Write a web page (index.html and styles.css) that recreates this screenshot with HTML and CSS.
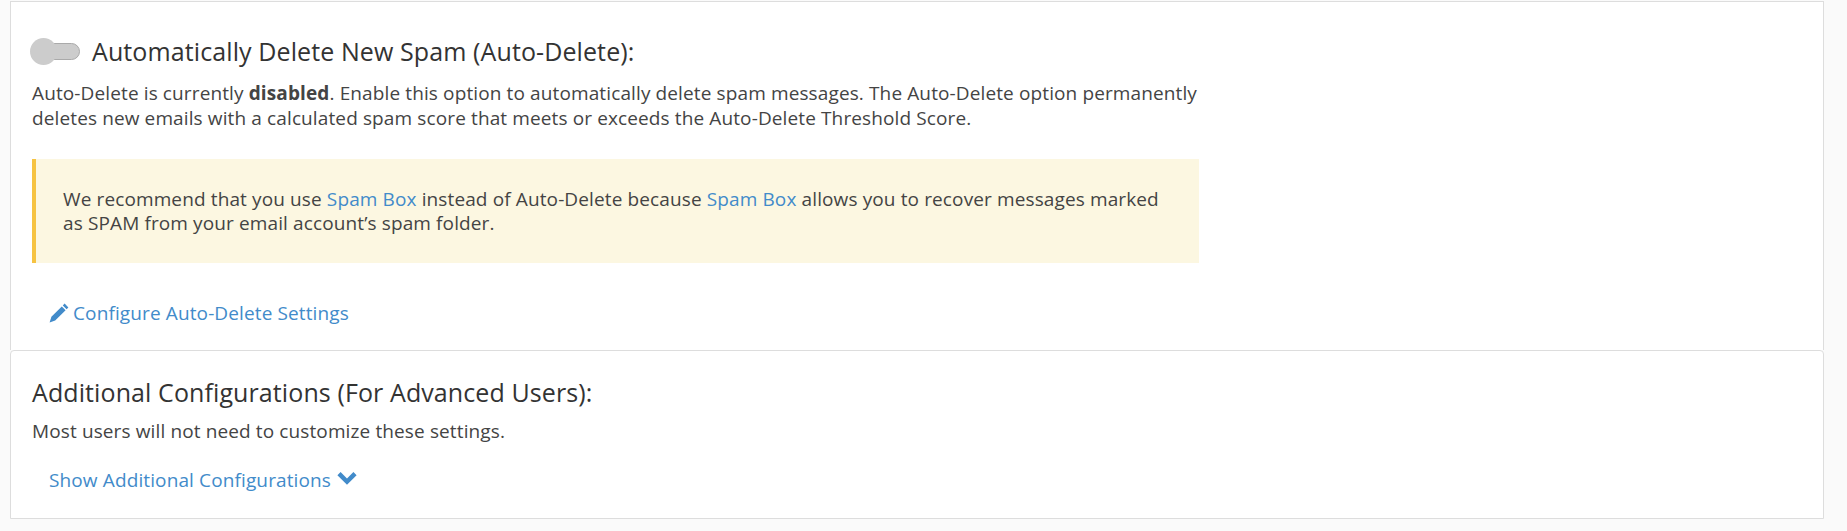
FILE: index.html
```html
<!DOCTYPE html>
<html lang="en">
<head>
<meta charset="utf-8">
<title>Spam Filters</title>
<link rel="stylesheet" href="styles.css">
</head>
<body>
<main class="page">
  <section class="panel panel-first">
    <div class="title-row">
      <span class="toggle"><span class="toggle-track"></span><span class="toggle-knob"></span></span>
      <h2 class="heading">Automatically Delete New Spam (Auto-Delete):</h2>
    </div>
    <p class="text">Auto-Delete is currently <strong>disabled</strong>. Enable this option to automatically delete spam messages. The Auto-Delete option permanently deletes new emails with a calculated spam score that meets or exceeds the Auto-Delete Threshold Score.</p>
    <div class="alert">We recommend that you use <a href="#">Spam Box</a> instead of Auto-Delete because <a href="#">Spam Box</a> allows you to recover messages marked as SPAM from your email account’s spam folder.</div>
    <a class="action" href="#"><svg class="icon-pencil" viewBox="0 0 20 20" aria-hidden="true"><path d="M15.6 0.6 19.4 4.4 17.6 6.2 13.8 2.4ZM12.8 3.4 16.6 7.2 6.2 17.6 0.6 19.4 2.4 13.8Z"/></svg>Configure Auto-Delete Settings</a>
  </section>
  <section class="panel panel-second">
    <h2 class="heading">Additional Configurations (For Advanced Users):</h2>
    <p class="text text-short">Most users will not need to customize these settings.</p>
    <a class="action action-show" href="#">Show Additional Configurations<svg class="icon-chevron" viewBox="0 0 20 14" aria-hidden="true"><path d="M10 13.8 0.4 4.2 3.6 1 10 7.4 16.4 1 19.6 4.2Z"/></svg></a>
  </section>
</main>
</body>
</html>
```
FILE: styles.css
```css
* { box-sizing: border-box; }
html, body { margin: 0; padding: 0; }
body {
  background: #fafafa;
  font-family: "Open Sans", sans-serif;
  font-size: 19px;
  letter-spacing: 0.12px;
  color: #444;
  height: 531px;
  overflow: hidden;
}
.page { padding: 1px 23px 0 10px; }
.panel {
  background: #fff;
  border-style: solid;
  border-width: 1px 1px 0 1px;
  border-color: #ddd;
  padding: 0 21px;
}
.panel-first { height: 349px; padding-top: 33px; }
.panel-second { height: 169px; border-bottom-width: 1px; border-radius: 4px 4px 0 0; padding-top: 25px; }
.title-row { display: flex; align-items: center; height: 32px; }
.toggle { position: relative; display: block; width: 50px; height: 27px; margin-left: -2px; margin-right: 12px; flex: none; }
.toggle-track { position: absolute; left: 10px; top: 5px; width: 40px; height: 17px; background: #ccc; border: 1px solid #aaa; border-radius: 9px; }
.toggle-knob { position: absolute; left: 0; top: 0; width: 27px; height: 27px; background: #ccc; border-radius: 50%; }
.heading { margin: 0; font-size: 25px; letter-spacing: 0.1px; font-weight: 400; line-height: 32px; color: #333; }
.text { margin: 14px 0 0; line-height: 25px; width: 1180px; }
.text-short { margin-top: 11px; }
.alert {
  margin-top: 28px;
  width: 1167px;
  height: 104px;
  padding: 28px 30px 0 27px;
  background: #fcf7e1;
  border-left: 4px solid #f6c342;
  line-height: 24px;
}
a { color: #428bca; text-decoration: none; }
.action { display: flex; align-items: center; margin: 38px 0 0 17px; line-height: 24px; }
.icon-pencil { width: 20px; height: 20px; fill: #428bca; margin-right: 4px; }
.action-show { margin-top: 24px; }
.icon-chevron { width: 20px; height: 14px; fill: #428bca; margin: -4px 0 0 6px; }
```
